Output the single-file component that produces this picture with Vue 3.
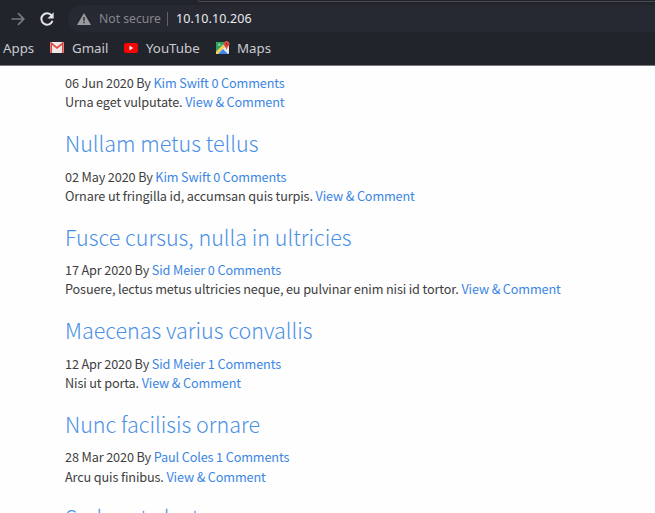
<script setup>
const posts = [
  { title: '', date: '06 Jun 2020', author: 'Kim Swift', comments: 0, text: 'Urna eget vulputate.' },
  { title: 'Nullam metus tellus', date: '02 May 2020', author: 'Kim Swift', comments: 0, text: 'Ornare ut fringilla id, accumsan quis turpis.' },
  { title: 'Fusce cursus, nulla in ultricies', date: '17 Apr 2020', author: 'Sid Meier', comments: 0, text: 'Posuere, lectus metus ultricies neque, eu pulvinar enim nisi id tortor.' },
  { title: 'Maecenas varius convallis', date: '12 Apr 2020', author: 'Sid Meier', comments: 1, text: 'Nisi ut porta.' },
  { title: 'Nunc facilisis ornare', date: '28 Mar 2020', author: 'Paul Coles', comments: 1, text: 'Arcu quis finibus.' },
]
</script>

<template>
  <div class="browser">
    <header class="chrome">
      <div class="tabstrip"><div class="edge"></div></div>
      <div class="toolbar">
        <svg class="forward" viewBox="0 0 14 14" width="14" height="14"><path d="M.5 7H12.5M7 1.2L12.8 7L7 12.8" fill="none" stroke="#777980" stroke-width="1.7" /></svg>
        <svg class="reload" viewBox="0 0 14 14" width="14" height="14"><path d="M11.6 3.5A5.7 5.7 0 1 0 12.5 8.8" fill="none" stroke="#e3e5e7" stroke-width="2" /><path d="M13.6.3V6.4H7.5Z" fill="#e3e5e7" /></svg>
        <div class="omnibox">
          <svg class="warn" viewBox="0 0 14 12" width="14" height="12"><path d="M7 0L14 12H0Z" fill="#999ba0" /><path d="M7 4V7.8M7 8.8V10.3" stroke="#272932" stroke-width="1.4" /></svg>
          <span class="insecure">Not secure</span>
          <i class="divider"></i>
          <span class="address">10.10.10.206</span>
        </div>
      </div>
      <nav class="bookmarks">
        <span class="apps">Apps</span>
        <span class="mark gmail">
          <svg viewBox="0 0 14 11" width="14" height="11"><rect width="14" height="11" rx="1" fill="#eee9e8" /><path d="M1.2 11V1.2L7 6L12.8 1.2V11" fill="none" stroke="#d9473f" stroke-width="1.7" /></svg>
          <span>Gmail</span>
        </span>
        <span class="mark youtube">
          <svg viewBox="0 0 14 10" width="14" height="10"><rect width="14" height="10" rx="2.2" fill="#f50505" /><path d="M5.5 2.8L9.4 5L5.5 7.2Z" fill="#fff" /></svg>
          <span>YouTube</span>
        </span>
        <span class="mark maps">
          <svg viewBox="0 0 14 14" width="14" height="14">
            <rect y="1" width="13" height="12" rx="1" fill="#e8ebed" />
            <path d="M0 2Q0 1 1 1H10L0 11Z" fill="#2da35a" />
            <path d="M0 11L7 4L9 6L1.5 13H0Z" fill="#f7cf4c" />
            <path d="M2 13L7 8L12 13Z" fill="#4285e8" />
            <circle cx="3.2" cy="3.8" r="1.5" fill="#7cc79b" />
            <path d="M10.5 9Q10 6.6 8.2 4.8A2.9 2.9 0 1 1 12.8 4.8Q11 6.6 10.5 9Z" fill="#df4b3f" />
            <circle cx="10.5" cy="3.1" r="1" fill="#8d2922" />
          </svg>
          <span>Maps</span>
        </span>
      </nav>
    </header>
    <main class="page">
      <article v-for="post in posts" :key="post.date" class="post">
        <h2 v-if="post.title"><a>{{ post.title }}</a></h2>
        <p>{{ post.date }} By <a>{{ post.author }}</a> <a>{{ post.comments }} Comments</a></p>
        <p>{{ post.text }} <a>View &amp; Comment</a></p>
      </article>
      <article class="post"><h2><a>Sed porta lectus</a></h2></article>
    </main>
  </div>
</template>

<style>
body { margin: 0; overflow: hidden; }
</style>

<style scoped>
.browser { width: 655px; height: 513px; overflow: hidden; display: flex; flex-direction: column; background: #fefefe; }
.chrome { flex: none; box-sizing: border-box; height: 66px; background: #22242c; border-bottom: 1px solid #77797d; font-family: "Noto Sans", sans-serif; font-size: 13.3px; }
.tabstrip { height: 5px; display: flex; justify-content: flex-end; }
.edge { width: 457px; height: 2px; box-sizing: border-box; border-bottom: 1px solid #4b4a51; border-left: 1px solid #4b4a51; border-bottom-left-radius: 3px; }
.toolbar { height: 27px; display: flex; align-items: center; }
.forward { margin-left: 11px; }
.reload { margin-left: 15px; }
.omnibox { flex: 1; height: 27px; margin-left: 14px; border-radius: 14px 0 0 14px; background: #272932; display: flex; align-items: center; }
.warn { margin-left: 9px; }
.insecure { width: 62px; margin-left: 8px; color: #85878d; font-size: 12.2px; white-space: nowrap; }
.divider { width: 1px; height: 14px; margin-left: 6px; background: #62646b; }
.address { margin-left: 8px; color: #e8eaed; font-size: 12.5px; letter-spacing: .12px; }
.bookmarks { height: 31px; display: flex; align-items: center; color: #c9cbcf; }
.apps { width: 47px; padding-left: 3px; }
.mark { display: flex; align-items: center; gap: 8px; }
.gmail { width: 74px; }
.youtube { width: 92px; }
.maps { gap: 7px; }
.page { padding: 7px 0 0 65px; font-family: "Noto Sans CJK JP", sans-serif; font-size: 12.7px; letter-spacing: -.138px; line-height: 19.3px; color: #404040; white-space: nowrap; }
h2 { margin: 0; padding: 15.5px 0 8px; font-size: 21.5px; letter-spacing: 0; line-height: 31.5px; font-weight: 300; }
p { margin: 0; }
a { color: #3b86e4; }
h2 a { color: #4a90e6; }
</style>
